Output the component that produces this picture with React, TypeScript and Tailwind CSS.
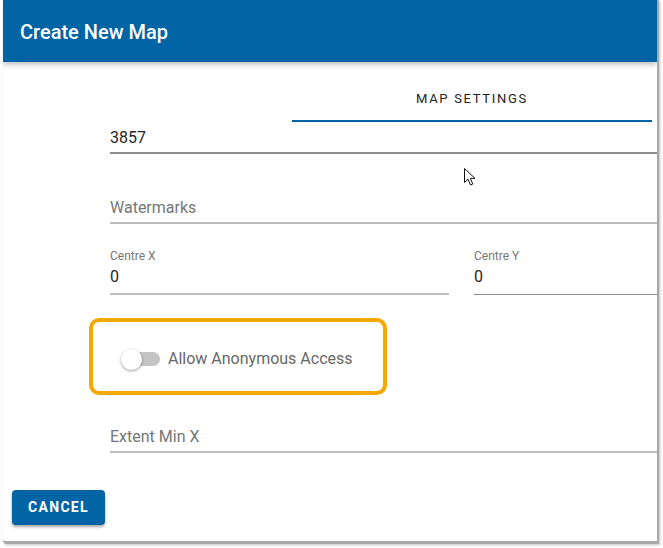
import { useState } from 'react';

function Field({ value, placeholder, className = '' }: { value?: string; placeholder?: string; className?: string }) {
  return (
    <div className={`pt-[4px] pb-[4px] border-b-2 ${className}`}>
      <div className={`text-[16px] leading-[20px] ${value ? 'text-[#262626]' : 'text-[#767676]'}`}>
        {value ?? placeholder}
      </div>
    </div>
  );
}

function LabelField({ label, value, className = '' }: { label: string; value: string; className?: string }) {
  return (
    <div className={`pb-[6px] ${className}`}>
      <div className="text-[12px] leading-[16px] text-[#767676]">{label}</div>
      <div className="mt-[3px] text-[16px] leading-[20px] text-[#262626]">{value}</div>
    </div>
  );
}

export default function App() {
  const [anonymous, setAnonymous] = useState(false);

  return (
    <div className="relative w-[663px] h-[548px] bg-white overflow-hidden" style={{ fontFamily: 'Roboto, "Liberation Sans", sans-serif' }}>
      <div className="relative ml-[3px] w-[656px] h-[544px] bg-white overflow-hidden border-r-2 border-b-[3px] border-[#a8a8a8] rounded-bl-[4px] shadow-[1px_1px_3px_rgba(0,0,0,0.25)]">
        {/* header */}
        <div className="relative z-10 h-[62px] bg-[#0064a5] pl-[17px] flex items-center shadow-[0_2px_6px_rgba(0,0,0,0.3)]">
          <h1 className="text-white text-[20px] font-medium pt-[1px]">Create New Map</h1>
        </div>

        {/* tabs */}
        <div className="mt-[14px] ml-[289px] w-[360px] h-[46px] border-b-2 border-[#0064a5] flex items-center justify-center pt-[2px]">
          <span className="text-[13px] tracking-[1.7px] text-[#222]">MAP SETTINGS</span>
        </div>

        <div className="ml-[107px] w-[600px]">
          <Field value="3857" className="mt-[2px] border-[#8c8c8c]" />
          <Field placeholder="Watermarks" className="mt-[40px] border-[#bdbdbd]" />

          <div className="mt-[24px] flex gap-[25px]">
            <LabelField label="Centre X" value="0" className="w-[339px] border-b-2 border-[#bdbdbd]" />
            <LabelField label="Centre Y" value="0" className="flex-1 border-b border-[#8c8c8c]" />
          </div>
        </div>

        {/* highlighted toggle */}
        <div className="mt-[23px] ml-[86px] w-[298px] h-[77px] border-[4px] border-[#f5a800] rounded-[10px] flex items-center pl-[28px] pt-[5px]">
          <button
            onClick={() => setAnonymous(!anonymous)}
            className="relative w-[40px] h-[22px] flex items-center"
          >
            <span className="absolute left-[3px] w-[36px] h-[14px] rounded-full bg-[#c4c4c4]" />
            <span className="absolute left-0 w-[21px] h-[21px] rounded-full bg-white shadow-[0_1px_3px_rgba(0,0,0,0.4)]" />
          </button>
          <span className="ml-[7px] text-[16px] text-[#686868]">Allow Anonymous Access</span>
        </div>

        <div className="ml-[107px] w-[600px]">
          <Field placeholder="Extent Min X" className="mt-[28px] border-[#bdbdbd]" />
        </div>

        <button className="mt-[37px] ml-[9px] w-[93px] h-[35px] rounded-[4px] bg-[#0064a5] text-white text-[14px] font-bold tracking-[1.3px] shadow-[0_2px_3px_rgba(0,0,0,0.35)]">
          CANCEL
        </button>

        {/* mouse pointer */}
        <svg className="absolute left-[460px] top-[167px]" width="14" height="20" viewBox="0 0 14 20">
          <path d="M1.5 1.5 L1.5 15.5 L5 12.2 L7.5 18 L9.8 17 L7.3 11.3 L12 11.3 Z" fill="white" stroke="#111" strokeWidth="1" strokeLinejoin="round" />
        </svg>
      </div>
    </div>
  );
}
